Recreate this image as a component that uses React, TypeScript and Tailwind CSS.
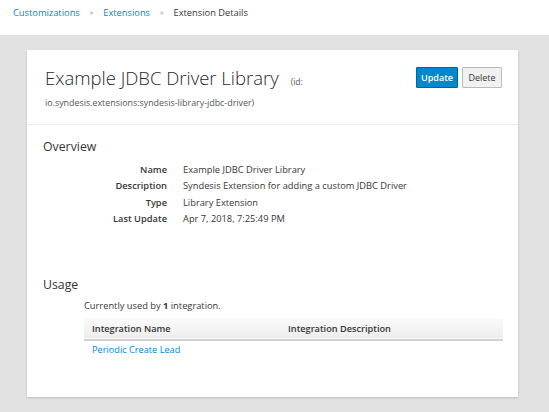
export default function App() {
  const rows = [
    ['Name', 'Example JDBC Driver Library'],
    ['Description', 'Syndesis Extension for adding a custom JDBC Driver'],
    ['Type', 'Library Extension'],
    ['Last Update', 'Apr 7, 2018, 7:25:49 PM'],
  ];

  return (
    <div className="w-[549px] h-[412px] overflow-hidden bg-[#e2e2e2] text-[#363636] font-['Open_Sans',sans-serif]">
      <div className="h-[35px] bg-white flex items-center pl-[13px] pb-[9px] text-[9.3px]">
        <a className="text-[#0088ce]">Customizations</a>
        <span className="mx-[10px] text-[#8b8d8f] text-[7px]">»</span>
        <a className="text-[#0088ce]">Extensions</a>
        <span className="mx-[10px] text-[#8b8d8f] text-[7px]">»</span>
        <span>Extension Details</span>
      </div>

      <div className="pt-[15px] pl-[27px]">
        <div className="w-[491px] h-[347px] bg-white shadow-[0_1px_2px_rgba(0,0,0,0.18)]">
          <div className="flex justify-between pl-[18px] pr-[16px] pt-[16px] h-[75px] border-b border-[#ededed]">
            <div>
              <div className="flex items-baseline">
                <h1 className="text-[18.5px] font-light leading-[24px] text-[#292929]">Example JDBC Driver Library</h1>
                <span className="ml-[12px] text-[8.5px] text-[#555]">(id:</span>
              </div>
              <div className="mt-[7px] text-[8.9px] leading-[11px] text-[#555]">io.syndesis.extensions:syndesis-library-jdbc-driver)</div>
            </div>
            <div className="flex gap-[4px] pt-[1px]">
              <button className="w-[42px] h-[21px] text-[9px] font-semibold text-white bg-[#0088ce] border border-[#00659c] rounded-[1px]">Update</button>
              <button className="w-[40px] h-[21px] text-[9px] text-[#363636] bg-[#f1f1f1] border border-[#bbbbbb] rounded-[1px]">Delete</button>
            </div>
          </div>

          <div className="pl-[16px] pt-[13px]">
            <h2 className="text-[12.3px] leading-[18px] text-[#363636]">Overview</h2>
            <div className="mt-[6px] text-[9.3px] leading-[16.4px]">
              {rows.map(([k, v]) => (
                <div key={k} className="flex">
                  <div className="w-[124px] text-right font-semibold">{k}</div>
                  <div className="ml-[16px]">{v}</div>
                </div>
              ))}
            </div>
          </div>

          <div className="pl-[16px] pt-[48px]">
            <h2 className="text-[12.3px] leading-[18px]">Usage</h2>
            <div className="pl-[41px] pr-[15px]">
              <p className="mt-[5px] text-[9.3px] leading-[14px]">
                Currently used by <b>1</b> integration.
              </p>
              <table className="mt-[6px] w-[419px] text-[9.2px] text-left">
                <thead>
                  <tr className="h-[21px] bg-gradient-to-b from-[#fafafa] to-[#ededed] border-b-2 border-[#d1d1d1]">
                    <th className="w-[204px] pl-[8px] font-semibold">Integration Name</th>
                    <th className="font-semibold">Integration Description</th>
                  </tr>
                </thead>
                <tbody>
                  <tr className="h-[20px]">
                    <td className="pl-[8px] text-[#0088ce]">Periodic Create Lead</td>
                    <td></td>
                  </tr>
                </tbody>
              </table>
            </div>
          </div>
        </div>
      </div>
    </div>
  );
}
